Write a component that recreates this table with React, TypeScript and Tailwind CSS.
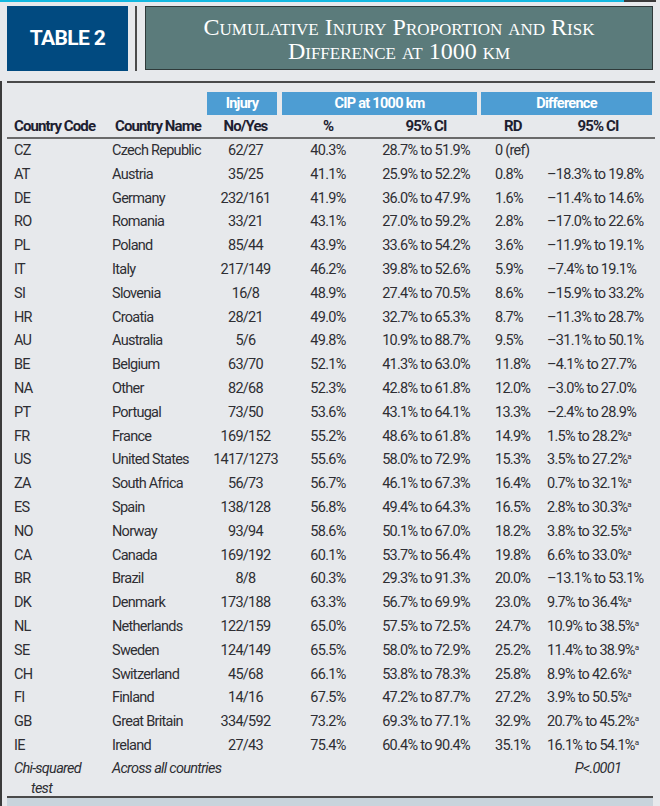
const rows: [string, string, string, string, string, string, string, boolean?][] = [
  ["CZ", "Czech Republic", "62/27", "40.3%", "28.7% to 51.9%", "0 (ref)", ""],
  ["AT", "Austria", "35/25", "41.1%", "25.9% to 52.2%", "0.8%", "–18.3% to 19.8%"],
  ["DE", "Germany", "232/161", "41.9%", "36.0% to 47.9%", "1.6%", "–11.4% to 14.6%"],
  ["RO", "Romania", "33/21", "43.1%", "27.0% to 59.2%", "2.8%", "–17.0% to 22.6%"],
  ["PL", "Poland", "85/44", "43.9%", "33.6% to 54.2%", "3.6%", "–11.9% to 19.1%"],
  ["IT", "Italy", "217/149", "46.2%", "39.8% to 52.6%", "5.9%", "–7.4% to 19.1%"],
  ["SI", "Slovenia", "16/8", "48.9%", "27.4% to 70.5%", "8.6%", "–15.9% to 33.2%"],
  ["HR", "Croatia", "28/21", "49.0%", "32.7% to 65.3%", "8.7%", "–11.3% to 28.7%"],
  ["AU", "Australia", "5/6", "49.8%", "10.9% to 88.7%", "9.5%", "–31.1% to 50.1%"],
  ["BE", "Belgium", "63/70", "52.1%", "41.3% to 63.0%", "11.8%", "–4.1% to 27.7%"],
  ["NA", "Other", "82/68", "52.3%", "42.8% to 61.8%", "12.0%", "–3.0% to 27.0%"],
  ["PT", "Portugal", "73/50", "53.6%", "43.1% to 64.1%", "13.3%", "–2.4% to 28.9%"],
  ["FR", "France", "169/152", "55.2%", "48.6% to 61.8%", "14.9%", "1.5% to 28.2%", true],
  ["US", "United States", "1417/1273", "55.6%", "58.0% to 72.9%", "15.3%", "3.5% to 27.2%", true],
  ["ZA", "South Africa", "56/73", "56.7%", "46.1% to 67.3%", "16.4%", "0.7% to 32.1%", true],
  ["ES", "Spain", "138/128", "56.8%", "49.4% to 64.3%", "16.5%", "2.8% to 30.3%", true],
  ["NO", "Norway", "93/94", "58.6%", "50.1% to 67.0%", "18.2%", "3.8% to 32.5%", true],
  ["CA", "Canada", "169/192", "60.1%", "53.7% to 56.4%", "19.8%", "6.6% to 33.0%", true],
  ["BR", "Brazil", "8/8", "60.3%", "29.3% to 91.3%", "20.0%", "–13.1% to 53.1%"],
  ["DK", "Denmark", "173/188", "63.3%", "56.7% to 69.9%", "23.0%", "9.7% to 36.4%", true],
  ["NL", "Netherlands", "122/159", "65.0%", "57.5% to 72.5%", "24.7%", "10.9% to 38.5%", true],
  ["SE", "Sweden", "124/149", "65.5%", "58.0% to 72.9%", "25.2%", "11.4% to 38.9%", true],
  ["CH", "Switzerland", "45/68", "66.1%", "53.8% to 78.3%", "25.8%", "8.9% to 42.6%", true],
  ["FI", "Finland", "14/16", "67.5%", "47.2% to 87.7%", "27.2%", "3.9% to 50.5%", true],
  ["GB", "Great Britain", "334/592", "73.2%", "69.3% to 77.1%", "32.9%", "20.7% to 45.2%", true],
  ["IE", "Ireland", "27/43", "75.4%", "60.4% to 90.4%", "35.1%", "16.1% to 54.1%", true],
];

export default function App() {
  return (
    <div className="w-[660px] h-[806px] bg-[#e7e9ec] overflow-hidden relative text-[#2e2e33] [font-family:Roboto,sans-serif]">
      {/* top accent line */}
      <div className="flex h-[2px]">
        <div className="w-[624px] bg-[#12b8e0]" />
        <div className="w-[32px] bg-[#3a3a3a]" />
      </div>

      {/* Title bar */}
      <div className="flex pt-[4px] pl-[7px] pr-[7px] h-[71px]">
        <div className="w-[121px] h-[65px] bg-[#014a80] flex items-center justify-center">
          <span className="text-white font-bold text-[21px] tracking-[-0.03em]">TABLE 2</span>
        </div>
        <div className="w-[2px] h-[65px] bg-[#4b4b4b] ml-[7px] mr-[8px]" />
        <div className="flex-1 h-[64px] bg-[#5b7b7b] border border-[#2f3a3a] flex flex-col items-center justify-center text-white leading-[24px] text-[24px] pt-[2px] [font-family:'Liberation_Serif',serif] [font-variant:small-caps]">
          <div>Cumulative Injury Proportion and Risk</div>
          <div>Difference at 1000 km</div>
        </div>
      </div>

      {/* table body with left border */}
      <div className="mt-[8px] border-l-[2px] border-[#3b3b3b] h-[725px] flex flex-col">
        <div className="mx-[5px] h-[2px] bg-[#4a4a4a]" />

        {/* group headers */}
        <div className="flex mt-[9px] h-[23px] text-white font-bold text-[14.5px] tracking-[-0.05em]">
          <div className="w-[205px]" />
          <div className="w-[70px] bg-[#4d9dd3] flex items-center justify-center">Injury</div>
          <div className="w-[195px] ml-[5px] bg-[#4d9dd3] flex items-center justify-center">CIP at 1000 km</div>
          <div className="w-[171px] ml-[4px] bg-[#4d9dd3] flex items-center justify-center">Difference</div>
        </div>

        {/* column headers */}
        <div className="flex h-[22px] items-center font-bold text-[15px] text-[#1d2030] tracking-[-0.06em] whitespace-nowrap">
          <div className="w-[110px] pl-[12px]">Country Code</div>
          <div className="w-[95px] pl-[3px]">Country Name</div>
          <div className="w-[77px] text-center">No/Yes</div>
          <div className="w-[88px] text-center">%</div>
          <div className="w-[108px] text-center">95% CI</div>
          <div className="w-[66px] pl-[24px]">RD</div>
          <div className="w-[104px] text-center">95% CI</div>
        </div>
        <div className="mx-[5px] h-[2px] bg-[#6a6a6a]" />

        {/* rows */}
        <div className="flex flex-col text-[14.5px] tracking-[-0.05em] whitespace-nowrap">
          {rows.map((r) => (
            <div key={r[0]} className="flex h-[23.8px] items-center">
              <div className="w-[110px] pl-[12px]">{r[0]}</div>
              <div className="w-[95px]">{r[1]}</div>
              <div className="w-[77px] text-center">{r[2]}</div>
              <div className="w-[88px] text-center">{r[3]}</div>
              <div className="w-[108px] text-center">{r[4]}</div>
              <div className="w-[66px] pl-[15px]">{r[5]}</div>
              <div className="w-[104px] pl-[1px]">
                {r[6]}
                {r[7] ? <span className="text-[8px] align-[5px]">a</span> : null}
              </div>
            </div>
          ))}

          {/* chi-squared */}
          <div className="flex italic pt-[1px]">
            <div className="w-[110px] pl-[12px] leading-[20px]">
              <div>Chi-squared</div>
              <div className="pl-[17px]">test</div>
            </div>
            <div className="w-[260px] leading-[20px]">Across all countries</div>
            <div className="w-[108px]" />
            <div className="w-[66px]" />
            <div className="w-[104px] text-center leading-[20px]">P&lt;.0001</div>
          </div>
        </div>
      </div>

      {/* bottom rule and band */}
      <div className="absolute left-[7px] right-[7px] top-[796px] h-[2px] bg-[#4a4a4a]" />
      <div className="absolute left-[7px] right-[7px] top-[798px] h-[8px] bg-[#c9d4dc]" />
    </div>
  );
}
